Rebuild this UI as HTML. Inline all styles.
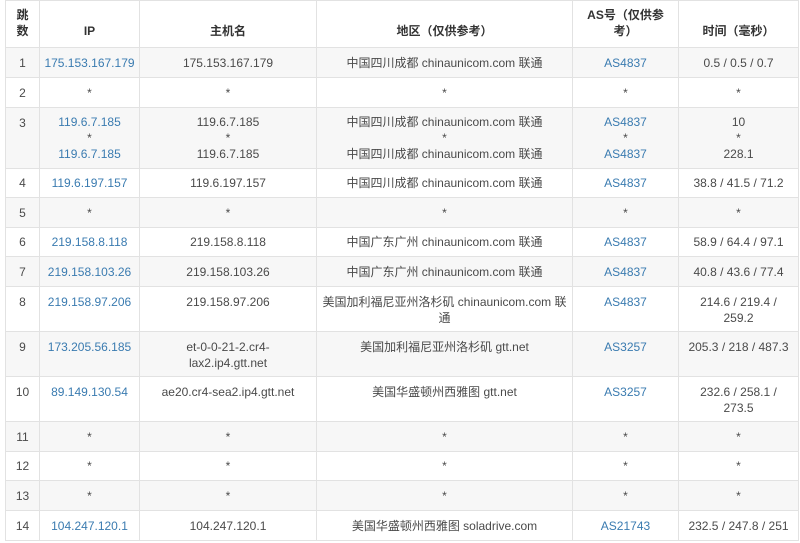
<!DOCTYPE html>
<html><head><meta charset="utf-8"><style>
body{margin:0;background:#fff;font-family:"Liberation Sans","Noto Sans CJK SC",sans-serif;font-size:12px;color:#4a4a4a;}
table{position:absolute;left:5px;top:0;border-collapse:collapse;table-layout:fixed;width:793px;}
td,th{border:1px solid #e2e2e2;text-align:center;vertical-align:middle;padding:0 3px;line-height:16px;}
th{font-weight:bold;color:#333;height:47px;vertical-align:bottom;padding-bottom:8px;box-sizing:border-box;}
tr:nth-child(even) td{background:#f7f7f7;}
a{color:#3a7bb0;text-decoration:none;}
.t{vertical-align:top;padding-top:7px;}
</style></head><body>
<table>
<colgroup><col style="width:34px"><col style="width:100px"><col style="width:177px"><col style="width:256px"><col style="width:106px"><col style="width:120px"></colgroup>
<tr><th>跳<br>数</th><th>IP</th><th>主机名</th><th>地区（仅供参考）</th><th>AS号（仅供参<br>考）</th><th>时间（毫秒）</th></tr>
<tr style="height:30px"><td>1</td><td><a>175.153.167.179</a></td><td>175.153.167.179</td><td>中国四川成都 chinaunicom.com 联通</td><td><a>AS4837</a></td><td>0.5 / 0.5 / 0.7</td></tr>
<tr style="height:30px"><td>2</td><td>*</td><td>*</td><td>*</td><td>*</td><td>*</td></tr>
<tr style="height:61px"><td class="t">3</td><td><a>119.6.7.185</a><br>*<br><a>119.6.7.185</a></td><td>119.6.7.185<br>*<br>119.6.7.185</td><td>中国四川成都 chinaunicom.com 联通<br>*<br>中国四川成都 chinaunicom.com 联通</td><td><a>AS4837</a><br>*<br><a>AS4837</a></td><td>10<br>*<br>228.1</td></tr>
<tr style="height:29px"><td>4</td><td><a>119.6.197.157</a></td><td>119.6.197.157</td><td>中国四川成都 chinaunicom.com 联通</td><td><a>AS4837</a></td><td>38.8 / 41.5 / 71.2</td></tr>
<tr style="height:30px"><td>5</td><td>*</td><td>*</td><td>*</td><td>*</td><td>*</td></tr>
<tr style="height:29px"><td>6</td><td><a>219.158.8.118</a></td><td>219.158.8.118</td><td>中国广东广州 chinaunicom.com 联通</td><td><a>AS4837</a></td><td>58.9 / 64.4 / 97.1</td></tr>
<tr style="height:30px"><td>7</td><td><a>219.158.103.26</a></td><td>219.158.103.26</td><td>中国广东广州 chinaunicom.com 联通</td><td><a>AS4837</a></td><td>40.8 / 43.6 / 77.4</td></tr>
<tr style="height:45px"><td class="t">8</td><td class="t"><a>219.158.97.206</a></td><td class="t">219.158.97.206</td><td class="t">美国加利福尼亚州洛杉矶 chinaunicom.com 联<br>通</td><td class="t"><a>AS4837</a></td><td class="t">214.6 / 219.4 /<br>259.2</td></tr>
<tr style="height:45px"><td class="t">9</td><td class="t"><a>173.205.56.185</a></td><td class="t">et-0-0-21-2.cr4-<br>lax2.ip4.gtt.net</td><td class="t">美国加利福尼亚州洛杉矶 gtt.net</td><td class="t"><a>AS3257</a></td><td class="t">205.3 / 218 / 487.3</td></tr>
<tr style="height:45px"><td class="t">10</td><td class="t"><a>89.149.130.54</a></td><td class="t">ae20.cr4-sea2.ip4.gtt.net</td><td class="t">美国华盛顿州西雅图 gtt.net</td><td class="t"><a>AS3257</a></td><td class="t">232.6 / 258.1 /<br>273.5</td></tr>
<tr style="height:30px"><td>11</td><td>*</td><td>*</td><td>*</td><td>*</td><td>*</td></tr>
<tr style="height:29px"><td>12</td><td>*</td><td>*</td><td>*</td><td>*</td><td>*</td></tr>
<tr style="height:30px"><td>13</td><td>*</td><td>*</td><td>*</td><td>*</td><td>*</td></tr>
<tr style="height:30px"><td>14</td><td><a>104.247.120.1</a></td><td>104.247.120.1</td><td>美国华盛顿州西雅图 soladrive.com</td><td><a>AS21743</a></td><td>232.5 / 247.8 / 251</td></tr>
</table>
</body></html>
